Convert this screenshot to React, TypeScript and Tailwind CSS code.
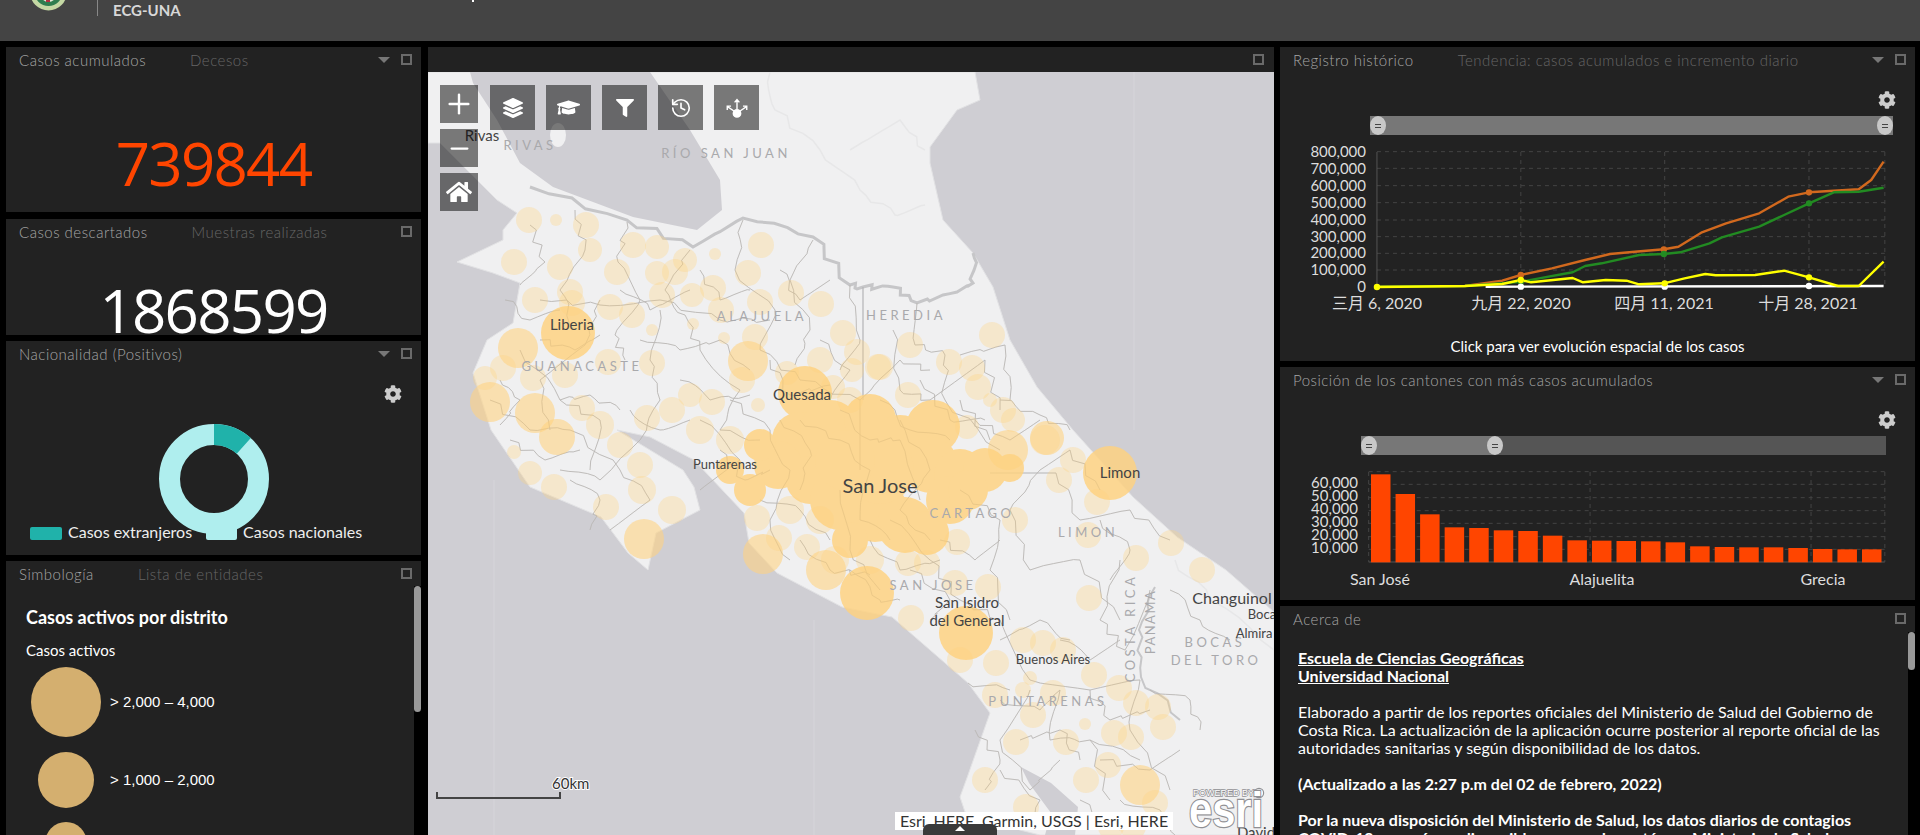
import type { ReactNode } from "react"
import { FaCog, FaFilter, FaGraduationCap, FaHome, FaLayerGroup } from "react-icons/fa"
import { History, Minus, Plus } from "lucide-react"

const sans = "font-['Lato','Noto_Sans_CJK_SC',sans-serif]"

// [x, y, r] in page coordinates
const pale = [
  [529,220,13],[556,220,6],[586,225,13],[633,245,13],[657,247,12],[514,262,13],[560,267,13],[617,272,13],[590,250,12],
  [715,254,6],[761,245,13],[748,273,13],[685,260,12],[657,273,12],[675,272,13],[713,288,13],[535,300,13],[570,292,13],
  [572,303,13],[610,307,13],[632,315,13],[662,295,13],[692,295,12],[721,310,13],[760,302,13],[791,293,13],[821,304,13],
  [693,324,6],[652,330,6],[724,338,6],[755,337,13],[843,333,13],[485,378,12],[503,368,13],[533,378,13],[565,375,13],
  [608,362,13],[652,363,13],[820,360,13],[878,367,13],[857,352,13],[787,373,12],[852,370,12],[582,408,13],[647,418,13],
  [672,410,13],[712,402,13],[742,380,13],[833,387,12],[758,405,7],[850,400,13],[910,345,13],[949,362,13],[992,335,13],
  [880,367,13],[972,368,13],[908,395,13],[978,387,13],[1003,410,13],[1013,420,12],[967,427,12],[990,400,7],[514,452,7],
  [530,473,12],[554,487,13],[606,507,13],[642,490,14],[672,510,14],[1045,440,15],[1073,460,13],[1059,480,13],[1097,502,13],
  [1088,535,13],[1015,520,13],[957,542,13],[1171,543,13],[1136,558,13],[1202,570,13],[807,547,13],[779,538,13],[757,518,13],
  [908,563,13],[927,563,13],[955,583,13],[988,587,13],[911,618,13],[1089,598,13],[960,660,13],[996,663,13],[1023,640,13],
  [1043,643,13],[1063,650,13],[1030,678,7],[1094,675,13],[1119,688,13],[995,695,13],[1023,690,8],[1053,693,13],[1033,715,13],
  [1136,703,13],[1158,707,13],[1163,727,13],[1085,724,6],[1114,733,13],[1131,737,13],[1016,742,13],[1066,742,13],[1108,765,13],
  [985,780,13],[1086,780,13],[1026,807,13],[1155,803,13],[1111,827,13],[1133,827,13],[600,425,14],[620,445,13],[700,430,14],
  [730,440,14],[640,465,13],[690,395,12],[835,560,14],[870,560,14],[790,510,14],[820,520,14],
]
const mid = [
  [518,348,20],[748,361,20],[490,402,20],[535,413,20],[557,437,18],[644,539,20],[1008,450,20],[763,554,20],[826,570,20],
  [1140,785,20],[1047,438,17],
]
// the flat mass of the central valley: drawn as one group so overlaps don't darken
const strong = [
  [568,333,27],[805,393,27],[933,427,27],[1110,473,27],[867,593,27],[966,633,27],
  [800,440,28],[778,465,24],[830,430,30],[870,420,26],[900,445,30],[930,465,28],[960,475,26],[985,470,22],[1010,468,14],
  [810,480,24],[840,500,30],[875,510,32],[905,525,28],[927,533,22],[850,540,18],[880,470,34],[845,460,30],[760,445,16],
  [950,500,24],[730,470,14],[750,490,16],[968,490,20],
]

const cantons = [
  [530,225,545,262,520,285],[575,210,585,250,560,290,575,330],[627,222,618,262,640,300,615,335,625,360],
  [690,250,665,290,685,315,700,350],[743,220,735,270,775,310,760,350],[813,240,790,280,810,330,795,365],
  [850,285,860,340,840,370],[540,300,600,305,660,300,720,320,770,320],[600,300,585,345,540,380,550,430],
  [660,310,650,360,660,400,640,440],[700,350,740,390,720,430,760,440],[760,350,800,380,860,400,900,360,930,370],
  [893,330,900,390,930,400,985,360,1000,410],[917,303,915,345,945,355,945,400,1000,450],[960,355,1005,345,1010,400],
  [520,350,560,400,600,420,590,470],[490,400,530,430,570,430,620,470],[620,470,650,500,610,530],[730,400,770,430,790,470],
  [790,470,770,520,790,560],[840,490,850,550,880,590],[890,520,930,560,960,600,1000,620],[960,490,1000,520,990,570,1010,620],
  [1040,470,1010,510,1030,570,1080,560,1120,620],[1056,473,1080,520,1130,510,1170,540],[1120,560,1100,620,1125,650,1150,590],
  [1000,620,1030,680,1090,690,1140,680],[1030,690,1000,740,1030,790,1060,760],[1060,690,1050,740,1090,740,1110,800],
  [1140,680,1130,730,1170,790],[968,683,1010,690],[1090,740,1140,760],[800,420,840,440,870,470,860,520,890,540],
  [840,410,870,440,900,440,920,500],[900,420,930,470,900,510,930,540],[700,420,740,460,700,490],[640,440,600,480,560,470],
  // denser cantons
  [505,300,530,320,560,310],[540,340,575,350,600,335],[620,290,650,310,690,290],[700,270,720,300,750,290],[780,270,800,300,830,280],
  [640,340,680,350,720,340,750,370],[680,380,710,400,750,395],[770,360,790,395,830,385],[820,340,850,370,830,400],
  [500,380,520,400,500,425],[560,400,590,395,620,410],[510,440,545,460,580,450],[570,480,600,500,590,530],[630,410,660,430,690,420],
  [720,450,745,480,770,470],[760,500,800,510,830,540],[800,540,830,570,870,575],[870,540,900,570,940,560],[940,540,975,560,1000,540],
  [975,420,1010,440,1040,420],[1000,400,1040,415,1070,430],[1040,470,1070,450,1100,490],[1100,520,1130,550,1110,580],
  [1000,640,1040,620,1070,640],[1060,640,1090,660,1120,640],[1000,700,1040,710,1060,690],[1090,690,1110,720,1150,710],
  [1020,740,1060,730,1080,760],[1000,770,1040,800,1030,830],[1100,760,1150,770,1180,750],[1120,800,1160,810,1175,835],
  [1080,800,1120,830],[975,730,1000,760,985,790],[910,570,950,600,930,620],[850,570,880,600,900,600],[1150,690,1190,700,1200,730],
  [1170,590,1200,620,1230,640],[920,380,950,420,985,420],[960,400,990,440],[780,420,810,450,800,490],[880,400,910,430,950,440],
]

// breaks a straight run up so the borders look hand-traced
function jag(p: number[]) {
  let d = `M${p[0]},${p[1]}`
  for (let i = 2; i < p.length; i += 2) {
    for (let k = 1; k <= 5; k++) {
      const x = p[i - 2] + ((p[i] - p[i - 2]) * k) / 5
      const y = p[i - 1] + ((p[i + 1] - p[i - 1]) * k) / 5
      const o = k === 5 ? 0 : Math.sin(x * 1.7 + y * 2.3) * 3.5
      d += ` L${(x + o).toFixed(1)},${(y - o * 0.7).toFixed(1)}`
    }
  }
  return d
}

const land =
  "428,72 975,72 980,100 957,110 930,147 930,163 943,220 973,253 993,287 1010,340 1037,387 1073,430 1133,497 1177,537 1226,570 1274,612 1274,835 1040,835 1020,830 965,812 960,797 968,775 990,713 968,683 892,617 842,607 777,573 749,543 744,513 694,460 650,437 617,430 650,450 683,470 694,487 700,510 656,533 648,570 628,553 601,517 530,487 491,430 473,373 487,340 513,323 520,283 493,273 457,262 503,240 503,230 517,213 497,200 440,143 428,143"
const lake = "470,72 650,72 690,130 720,180 722,210 697,230 633,217 553,187 520,163 497,120 473,83"

const places: [string, number, number, number][] = [
  ["Rivas", 482, 141, 15], ["Liberia", 572, 330, 15], ["Quesada", 802, 400, 15], ["San Jose", 880, 493, 20],
  ["Puntarenas", 725, 469, 13], ["Limon", 1120, 478, 15], ["San Isidro", 967, 608, 15], ["del General", 967, 626, 15],
  ["Buenos Aires", 1053, 664, 13], ["Changuinol", 1232, 604, 16], ["Almira", 1254, 638, 13], ["Boca", 1262, 619, 13],
  ["David", 1256, 838, 15],
]
const regions: [string, number, number][] = [
  ["RIVAS", 530, 150], ["RÍO SAN JUAN", 726, 158], ["GUANACASTE", 582, 371], ["ALAJUELA", 762, 321], ["HEREDIA", 906, 320],
  ["CARTAGO", 972, 518], ["LIMON", 1088, 537], ["SAN JOSE", 933, 590], ["PUNTARENAS", 1048, 706], ["BOCAS", 1215, 647], ["DEL TORO", 1216, 665],
]

function MapCanvas() {
  return (
    <svg viewBox="428 72 846 763" className={`absolute inset-0 h-full w-full ${sans}`}>
      <rect x="428" y="72" width="846" height="763" fill="#cfced3" />
      <polygon points={land} fill="#f0f0f1" stroke="#e2e2e4" strokeWidth="1" />
      <polygon points={lake} fill="#cfced3" />
      <ellipse cx="558" cy="135" rx="8" ry="12" fill="#f0f0f1" />
      <polygon points="1021,767 1051,783 1078,807 1075,835 1045,835 1051,813 1029,783" fill="#cfced3" />
      <path d="M1134 72V430M494 480V835M814 620V835" stroke="#d6d5da" strokeWidth="1" />
      <g fill="none" stroke="#e7e7e8" strokeWidth="1.5">
        <path d={jag([770,72,775,110,820,150,860,190,895,215,925,205])} />
        <path d={jag([850,150,900,120,925,150])} />
        <path d={jag([1175,560,1210,600,1274,650])} />
      </g>
      <path d={jag([530,187,627,220,693,247,743,218,813,237,850,285,863,287,893,287,917,303,957,292,973,283,973,253])} fill="none" stroke="#c6c6c8" strokeWidth="3" />
      <path d={jag([1155,587,1139,630,1141,677,1180,720])} fill="none" stroke="#c6c6c8" strokeWidth="2" />
      <path d="M863 287V400M860 400V470M990 473H1056" fill="none" stroke="#b4b4b6" strokeWidth="1.2" />
      <g fill="none" stroke="#bcbcbe" strokeWidth="0.9">
        {cantons.map((c, i) => <path key={i} d={jag(c)} />)}
      </g>
      <g fill="#ffd27f">
        {pale.map(([x, y, r], i) => <circle key={i} cx={x} cy={y} r={r} opacity={0.32} />)}
        {mid.map(([x, y, r], i) => <circle key={i} cx={x} cy={y} r={r} opacity={0.58} />)}
        <g opacity={0.82}>
          {strong.map(([x, y, r], i) => <circle key={i} cx={x} cy={y} r={r} />)}
        </g>
      </g>
      <g fill="none" stroke="#b09a70" strokeWidth="0.7" opacity={0.15}>
        {cantons.map((c, i) => <path key={i} d={jag(c)} />)}
      </g>
      <g fill="#a9a9ac" fontSize="13" textAnchor="middle" letterSpacing="3.5">
        {regions.map(([t, x, y]) => <text key={t} x={x} y={y}>{t}</text>)}
        <text transform="translate(1135 628) rotate(-90)">COSTA RICA</text>
        <text transform="translate(1155 622) rotate(-90)" letterSpacing="1.5">PANAMA</text>
      </g>
      <g fill="#444" textAnchor="middle">
        {places.map(([t, x, y, s]) => <text key={t} x={x} y={y} fontSize={s}>{t}</text>)}
      </g>
      <path d="M437 792V798H560V792" fill="none" stroke="#444" strokeWidth="2" />
      <text x="552" y="789" fontSize="15" fill="#333" stroke="#fff" strokeWidth="2" paintOrder="stroke">60km</text>
      <g fill="#fff" stroke="#8f8f93" strokeWidth="2.4" paintOrder="stroke">
        <text x="1193" y="796" fontSize="9" strokeWidth="1.4" className="font-['Liberation_Sans',sans-serif]">POWERED BY</text>
        <circle cx="1259" cy="793" r="4" />
        <text x="1189" y="827" fontSize="50" fontWeight="700" textLength="74" lengthAdjust="spacingAndGlyphs" className="font-['Liberation_Sans',sans-serif]">esri</text>
      </g>
    </svg>
  )
}

function ShareIcon() {
  return (
    <svg viewBox="0 0 24 24" className="h-[26px] w-[26px]" fill="none" stroke="#fff" strokeWidth="1.3">
      <circle cx="12" cy="17" r="3.4" fill="#fff" />
      <path d="M12 13V4.5M9.8 6.8 12 4.2 14.2 6.8M9.5 15 3.2 10.8M3 13.8V10.3H6.5M14.5 15 20.8 10.8M21 13.8V10.3H17.5" />
    </svg>
  )
}

function ToolButton({ children }: { children: ReactNode }) {
  return <div className="flex h-[45px] w-[45px] items-center justify-center bg-black/50 text-white">{children}</div>
}

function ZoomButton({ children }: { children: ReactNode }) {
  return <div className="flex h-[38px] w-[38px] items-center justify-center bg-black/50 text-white">{children}</div>
}

function Caret() {
  return <div className="h-0 w-0 border-x-[6px] border-t-[6px] border-x-transparent border-t-[#777]" />
}

function Square() {
  return <div className="h-[11px] w-[11px] border-2 border-[#6a6a6a]" />
}

function TitleBar({ tabs, gap, caret }: { tabs: string[]; gap: string; caret?: boolean }) {
  return (
    <div className="flex h-[28px] shrink-0 items-center pl-[13px] pr-[9px] text-[15px] font-light tracking-[0.5px]">
      <div className={`-mt-[1px] flex ${gap}`}>
        {tabs.map((t, i) => (
          <span key={t} className={i === 0 ? "text-[#a6a6a6]" : "text-[#666]"}>{t}</span>
        ))}
      </div>
      <div className="ml-auto -mt-[3px] flex items-center gap-[11px]">
        {caret && <Caret />}
        <Square />
      </div>
    </div>
  )
}

function Panel({ h, children, grow }: { h?: string; children: ReactNode; grow?: boolean }) {
  return <section className={`flex flex-col overflow-hidden bg-[#222] ${h ?? ""} ${grow ? "flex-1" : ""}`}>{children}</section>
}

function Gear({ top }: { top: string }) {
  return (
    <div className={`flex justify-end pr-[19px] ${top}`}>
      <FaCog className="h-[18px] w-[18px] text-[#ccc]" />
    </div>
  )
}

function Handle({ left }: { left: string }) {
  return (
    <div className={`absolute top-0 flex h-[19px] w-[16px] flex-col items-center justify-center gap-[2px] rounded-[50%] bg-[#c8c8c8] ${left}`}>
      <div className="h-px w-[6px] bg-[#444]" />
      <div className="h-px w-[6px] bg-[#444]" />
    </div>
  )
}

const zx = (x: number) => x / 2.412 - 10
const zy = (y: number) => y / 3 - 95
const line = (a: number[][]) => a.map(([x, y]) => `${zx(x).toFixed(1)},${zy(y).toFixed(1)}`).join(" ")

const orange = [[258,740],[470,738],[560,722],[605,705],[680,685],[760,660],[820,642],[880,635],[950,628],[985,620],[1040,578],[1100,550],[1180,520],[1250,470],[1300,457],[1420,448],[1450,420],[1480,365]]
const green = [[258,740],[470,738],[560,730],[605,725],[730,697],[760,678],[800,670],[890,645],[950,642],[990,637],[1060,610],[1090,592],[1180,560],[1240,525],[1300,490],[1360,457],[1420,455],[1480,443]]
const yellow = [[258,741],[470,738],[560,732],[605,720],[630,727],[730,714],[755,727],[810,720],[860,722],[890,733],[950,730],[1000,715],[1050,702],[1075,706],[1170,705],[1240,692],[1300,712],[1370,738],[1420,738],[1480,665]]
const white = [[520,740],[1480,738]]

function TrendChart() {
  const marks: [number[][], string, number[][]][] = [
    [orange, "#d2691e", [[605,705],[950,628],[1300,457]]],
    [green, "#228b22", [[605,725],[950,642],[1300,490]]],
    [white, "#fff", [[605,740],[952,740],[1300,738]]],
    [yellow, "#ffff00", [[258,741],[605,720],[952,730],[1300,712]]],
  ]
  return (
    <svg width="635" height="180" className={sans}>
      <g stroke="#444" strokeDasharray="4 4">
        {[335,385,437,488,540,590,640,690].map((y) => <line key={y} x1={zx(258)} x2={zx(1483)} y1={zy(y)} y2={zy(y)} />)}
        {[605,952,1300,1483].map((x) => <line key={x} x1={zx(x)} x2={zx(x)} y1={17} y2={152} />)}
      </g>
      <line x1={zx(258)} x2={zx(258)} y1={17} y2={152} stroke="#555" />
      {marks.map(([data, color]) => <polyline key={color} points={line(data)} fill="none" stroke={color} strokeWidth="2.4" strokeLinejoin="round" />)}
      {marks.map(([, color, dots]) =>
        dots.map(([x, y]) => <circle key={color + x} cx={zx(x)} cy={zy(y)} r="3.2" fill={color} />),
      )}
      <g fill="#ddd" fontSize="15" textAnchor="end">
        {["800,000","700,000","600,000","500,000","400,000","300,000","200,000","100,000","0"].map((t, i) => (
          <text key={t} x="86" y={22 + i * 16.9}>{t}</text>
        ))}
      </g>
      <g fill="#ddd" fontSize="16" textAnchor="middle">
        <text x="97" y="174">三月 6, 2020</text>
        <text x="241" y="174">九月 22, 2020</text>
        <text x="384" y="174">四月 11, 2021</text>
        <text x="528" y="174">十月 28, 2021</text>
      </g>
    </svg>
  )
}

const bars = [343,402,463,502,504,511,513,527,541,542,543,544,547,559,561,562,562,564,567,568,568]

function RankChart() {
  return (
    <svg width="635" height="145" className={sans}>
      <g stroke="#444" strokeDasharray="4 4">
        {[335,373,413,452,490,530,568].map((y) => <line key={y} x1={zx(238)} x2={zx(1483)} y1={zy(y)} y2={zy(y)} />)}
        {[238,772,1305,1483].map((x) => <line key={x} x1={zx(x)} x2={zx(x)} y1={17} y2={107} />)}
      </g>
      <line x1={zx(238)} x2={zx(1483)} y1="107" y2="107" stroke="#555" />
      {bars.map((b, i) => (
        <rect key={i} x={91 + i * 24.55} y={zy(b)} width="19.5" height={607 / 3 - b / 3} fill="#ff4500" />
      ))}
      <g fill="#ddd" fontSize="15" textAnchor="end">
        {["60,000","50,000","40,000","30,000","20,000","10,000"].map((t, i) => (
          <text key={t} x="78" y={33 + i * 13}>{t}</text>
        ))}
      </g>
      <g fill="#ddd" fontSize="16" textAnchor="middle">
        <text x="100" y="130">San José</text>
        <text x="322" y="130">Alajuelita</text>
        <text x="543" y="130">Grecia</text>
      </g>
    </svg>
  )
}

function Legend() {
  const rows = [
    { label: "> 2,000 – 4,000", size: "h-[70px] w-[70px]", mt: "mt-[7px]" },
    { label: "> 1,000 – 2,000", size: "h-[56px] w-[56px]", mt: "mt-[15px]" },
    { label: "> 500 – 1,000", size: "h-[42px] w-[42px]", mt: "mt-[14px]" },
  ]
  return (
    <div className="min-w-0 flex-1 pl-[20px] pt-[20px]">
      <h3 className="text-[18px] font-bold leading-[22px] text-white">Casos activos por distrito</h3>
      <p className="mt-[12px] text-[15px] leading-[20px] text-white">Casos activos</p>
      {rows.map((r) => (
        <div key={r.label} className={`flex items-center ${r.mt}`}>
          <div className="ml-[5px] flex w-[70px] justify-center">
            <div className={`rounded-full bg-[#d4af6f] ${r.size}`} />
          </div>
          <span className="ml-[9px] font-['Liberation_Sans',sans-serif] text-[15px] text-white">{r.label}</span>
        </div>
      ))}
    </div>
  )
}

function Scrollbar({ h }: { h: string }) {
  return (
    <div className="w-[7px] shrink-0 bg-black">
      <div className={`w-full rounded-full bg-[#999] ${h}`} />
    </div>
  )
}

export default function App() {
  return (
    <div className={`h-[835px] w-[1920px] overflow-hidden bg-black ${sans}`}>
      <header className="flex h-[41px] bg-[#444] pl-[30px]">
        <svg width="37" height="11" viewBox="0 0 37 11">
          <circle cx="18.5" cy="-8" r="18.5" fill="#c4d8a4" />
          <circle cx="18.5" cy="-8" r="14" fill="#2e7d4f" />
          <circle cx="18.5" cy="-6" r="8" fill="#e8e8d8" />
          <path d="M16 2h4v-6h-4z" fill="#b03040" />
        </svg>
        <div className="ml-[30px] h-[16px] w-px bg-[#888]" />
        <div className="ml-[15px] pt-[2px] text-[15px] font-bold leading-[17px] text-[#d8d8d8]">ECG-UNA</div>
        <div className="ml-[291px] h-[2px] w-[2px] bg-white" />
      </header>

      <main className="flex h-[794px] pl-[6px] pt-[6px]">
        <div className="flex w-[415px] flex-col">
          <Panel h="h-[165px]">
            <TitleBar tabs={["Casos acumulados", "Decesos"]} gap="gap-[44px]" caret />
            <div className="mt-[58px] text-center font-['Open_Sans',sans-serif] text-[60px] leading-[60px] tracking-[-1.7px] text-[#ff4500]">739844</div>
          </Panel>
          <div className="mt-[7px]">
            <Panel h="h-[116px]">
              <TitleBar tabs={["Casos descartados", "Muestras realizadas"]} gap="gap-[44px]" />
              <div className="mt-[33px] text-center font-['Open_Sans',sans-serif] text-[60px] leading-[60px] tracking-[-1.7px] text-white">1868599</div>
            </Panel>
          </div>
          <div className="mt-[6px]">
            <Panel h="h-[214px]">
              <TitleBar tabs={["Nacionalidad (Positivos)"]} gap="gap-0" caret />
              <Gear top="mt-[16px]" />
              <div className="mt-[21px] flex justify-center">
                <svg width="110" height="110" viewBox="-55 -55 110 110">
                  <circle r="44.5" fill="none" stroke="#afeeee" strokeWidth="21" />
                  <path d="M0 -55A55 55 0 0 1 36.8 -40.9L22.7 -25.3A34 34 0 0 0 0 -34Z" fill="#20b2aa" />
                </svg>
              </div>
              <div className="relative -mt-[10px] flex pl-[24px] text-[16px] leading-[16px] text-[#eee]">
                <div className="mt-[3px] h-[13px] w-[32px] rounded-[2px] bg-[#20b2aa]" />
                <span className="ml-[6px] w-[125px] whitespace-nowrap">Casos extranjeros</span>
                <div className="ml-[13px] mt-[3px] h-[13px] w-[31px] rounded-[2px] bg-[#afeeee]" />
                <span className="ml-[6px] whitespace-nowrap">Casos nacionales</span>
              </div>
            </Panel>
          </div>
          <div className="mt-[6px] flex-1 overflow-hidden">
            <Panel h="h-full">
              <TitleBar tabs={["Simbología", "Lista de entidades"]} gap="gap-[44px]" />
              <div className="-mt-[3px] flex min-h-0 flex-1 overflow-hidden">
                <Legend />
                <Scrollbar h="h-[126px]" />
              </div>
            </Panel>
          </div>
        </div>

        <div className="ml-[7px] flex w-[846px] flex-col">
          <div className="flex h-[25px] shrink-0 items-center justify-end bg-[#222] pr-[10px]">
            <Square />
          </div>
          <div className="relative flex-1 overflow-hidden">
            <MapCanvas />
            <div className="absolute left-[12px] top-[13px] flex flex-col gap-[6px]">
              <ZoomButton><Plus size={32} strokeWidth={1.8} /></ZoomButton>
              <ZoomButton><Minus size={27} strokeWidth={2} /></ZoomButton>
              <ZoomButton><FaHome size={26} /></ZoomButton>
            </div>
            <div className="absolute left-[62px] top-[13px] flex gap-[11px]">
              <ToolButton><FaLayerGroup size={20} /></ToolButton>
              <ToolButton><FaGraduationCap size={23} /></ToolButton>
              <ToolButton><FaFilter size={18} /></ToolButton>
              <ToolButton><History size={22} strokeWidth={1.8} /></ToolButton>
              <ToolButton><ShareIcon /></ToolButton>
            </div>
            <div className="absolute bottom-[5px] left-[467px] h-[18px] whitespace-nowrap bg-white px-[5px] text-[16px] leading-[18px] text-[#333]">
              Esri, HERE, Garmin, USGS | Esri, HERE
            </div>
            <div className="absolute bottom-0 left-[495px] flex h-[11px] w-[74px] justify-center rounded-t-[6px] bg-[#3a3a3a] pt-[2px]">
              <div className="h-0 w-0 border-x-[5px] border-b-[5px] border-x-transparent border-b-white" />
            </div>
          </div>
        </div>

        <div className="ml-[6px] flex w-[635px] flex-col">
          <Panel h="h-[314px]">
            <TitleBar tabs={["Registro histórico", "Tendencia: casos acumulados e incremento diario"]} gap="gap-[44px]" caret />
            <Gear top="mt-[16px]" />
            <div className="relative ml-[90px] mt-[7px] h-[19px] w-[523px] shrink-0 bg-[#777]">
              <Handle left="left-0" />
              <Handle left="right-0" />
            </div>
            <TrendChart />
            <p className="mt-[22px] text-center text-[15px] leading-[18px] text-white">Click para ver evolución espacial de los casos</p>
          </Panel>
          <div className="mt-[6px]">
            <Panel h="h-[233px]">
              <TitleBar tabs={["Posición de los cantones con más casos acumulados"]} gap="gap-0" caret />
              <Gear top="mt-[16px]" />
              <div className="relative ml-[81px] mt-[7px] h-[19px] w-[525px] shrink-0 bg-[#555]">
                <div className="h-full w-[134px] bg-[#777]" />
                <Handle left="left-0" />
                <Handle left="left-[126px]" />
              </div>
              <RankChart />
            </Panel>
          </div>
          <div className="mt-[6px] flex-1 overflow-hidden">
            <Panel h="h-full">
              <TitleBar tabs={["Acerca de"]} gap="gap-0" />
              <div className="-mt-[2px] flex min-h-0 flex-1 overflow-hidden">
                <div className="min-w-0 flex-1 pl-[18px] pr-[8px] pt-[17px] text-[16px] leading-[18px] text-white">
                  <p className="font-bold underline">Escuela de Ciencias Geográficas<br />Universidad Nacional</p>
                  <p className="mt-[18px]">Elaborado a partir de los reportes oficiales del Ministerio de Salud del Gobierno de Costa Rica. La actualización de la aplicación ocurre posterior al reporte oficial de las autoridades sanitarias y según disponibilidad de los datos.</p>
                  <p className="mt-[18px] font-bold">(Actualizado a las 2:27 p.m del 02 de febrero, 2022)</p>
                  <p className="mt-[18px] font-bold">Por la nueva disposición del Ministerio de Salud, los datos diarios de contagios COVID-19 no serán ya disponibles para cada cantón en Ministerio de Salud</p>
                </div>
                <Scrollbar h="h-[38px]" />
              </div>
            </Panel>
          </div>
        </div>
      </main>
    </div>
  )
}
